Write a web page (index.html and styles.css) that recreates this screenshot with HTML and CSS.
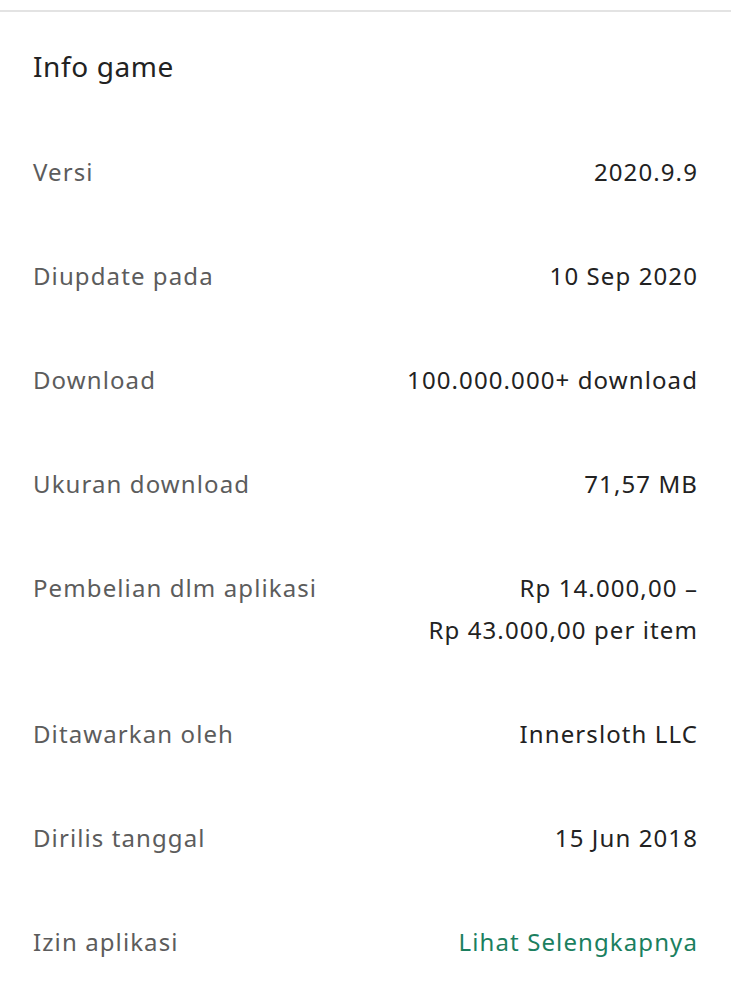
FILE: index.html
```html
<!DOCTYPE html>
<html lang="id">
<head>
<meta charset="utf-8">
<link rel="stylesheet" href="styles.css">
</head>
<body>
<div class="divider"></div>
<section class="info">
  <h2 class="title">Info game</h2>
  <div class="row"><div class="label">Versi</div><div class="value">2020.9.9</div></div>
  <div class="row"><div class="label">Diupdate pada</div><div class="value">10 Sep 2020</div></div>
  <div class="row"><div class="label">Download</div><div class="value">100.000.000+ download</div></div>
  <div class="row"><div class="label">Ukuran download</div><div class="value">71,57 MB</div></div>
  <div class="row"><div class="label">Pembelian dlm aplikasi</div><div class="value">Rp 14.000,00 –<br>Rp 43.000,00 per item</div></div>
  <div class="row"><div class="label">Ditawarkan oleh</div><div class="value">Innersloth LLC</div></div>
  <div class="row"><div class="label">Dirilis tanggal</div><div class="value">15 Jun 2018</div></div>
  <div class="row"><div class="label">Izin aplikasi</div><div class="value link">Lihat Selengkapnya</div></div>
</section>
</body>
</html>
```
FILE: styles.css
```css
html, body {
  margin: 0;
  padding: 0;
  background: #fff;
}
body {
  font-family: "Noto Sans", "DejaVu Sans", sans-serif;
  width: 731px;
  height: 1000px;
  overflow: hidden;
}
.divider {
  margin-top: 10px;
  height: 2px;
  background: #e3e3e3;
}
.info {
  padding: 0 33px 0 33px;
}
.title {
  margin: 0;
  height: 108px;
  display: flex;
  align-items: center;
  font-size: 28px;
  font-weight: 400;
  letter-spacing: 0.6px;
  color: #222;
}
.row {
  display: flex;
  justify-content: space-between;
  align-items: flex-start;
  padding: 31px 0;
  font-size: 24px;
  line-height: 42px;
  letter-spacing: 1.1px;
}
.label {
  color: #5c5c5c;
}
.value {
  color: #222;
  text-align: right;
}
.link {
  color: #1b7f5f;
}
```
